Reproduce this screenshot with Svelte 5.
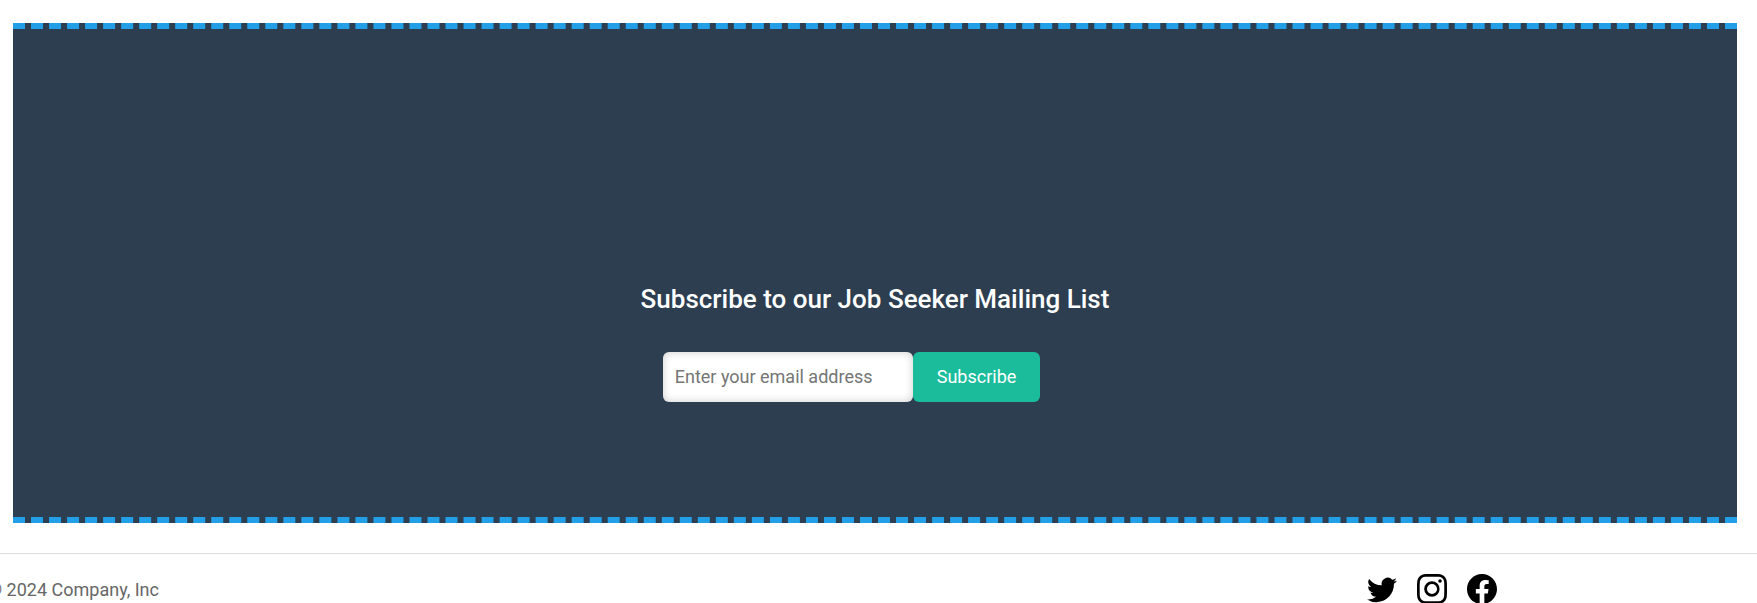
<script>
  let email = $state('');
</script>

<div class="page">
  <section class="subscribe">
    <h2>Subscribe to our Job Seeker Mailing List</h2>
    <form onsubmit={(e) => e.preventDefault()}>
      <input type="email" aria-label="Email address" placeholder="Enter your email address" bind:value={email} />
      <button type="submit">Subscribe</button>
    </form>
  </section>

  <footer>
    <p>© 2024 Company, Inc</p>
    <ul>
      <li>
        <a href="#twitter" aria-label="Twitter">
          <svg viewBox="0 0 16 16"><path d="M5.026 15c6.038 0 9.341-5.003 9.341-9.334 0-.14 0-.282-.006-.422A6.685 6.685 0 0 0 16 3.542a6.658 6.658 0 0 1-1.889.518 3.301 3.301 0 0 0 1.447-1.817 6.533 6.533 0 0 1-2.087.793A3.286 3.286 0 0 0 7.875 6.03a9.325 9.325 0 0 1-6.767-3.429 3.289 3.289 0 0 0 1.018 4.382A3.323 3.323 0 0 1 .64 6.575v.045a3.288 3.288 0 0 0 2.632 3.218 3.203 3.203 0 0 1-.865.115 3.23 3.23 0 0 1-.614-.057 3.283 3.283 0 0 0 3.067 2.277A6.588 6.588 0 0 1 .78 13.58a6.32 6.32 0 0 1-.78-.045A9.344 9.344 0 0 0 5.026 15z" /></svg>
        </a>
      </li>
      <li>
        <a href="#instagram" aria-label="Instagram">
          <svg viewBox="0 0 16 16"><path d="M8 0C5.829 0 5.556.01 4.703.048 3.85.088 3.269.222 2.76.42a3.917 3.917 0 0 0-1.417.923A3.927 3.927 0 0 0 .42 2.76C.222 3.268.087 3.85.048 4.7.01 5.555 0 5.827 0 8.001c0 2.172.01 2.444.048 3.297.04.852.174 1.433.372 1.942.205.526.478.972.923 1.417.444.445.89.719 1.416.923.51.198 1.09.333 1.942.372C5.555 15.99 5.827 16 8 16s2.444-.01 3.298-.048c.851-.04 1.434-.174 1.943-.372a3.916 3.916 0 0 0 1.416-.923c.445-.445.718-.891.923-1.417.197-.509.332-1.09.372-1.942C15.99 10.445 16 10.173 16 8s-.01-2.445-.048-3.299c-.04-.851-.175-1.433-.372-1.941a3.926 3.926 0 0 0-.923-1.417A3.911 3.911 0 0 0 13.24.42c-.51-.198-1.092-.333-1.943-.372C10.443.01 10.172 0 7.998 0h.003zm-.717 1.442h.718c2.136 0 2.389.007 3.232.046.78.035 1.204.166 1.486.275.373.145.64.319.92.599.28.28.453.546.598.92.11.281.24.705.275 1.485.039.843.047 1.096.047 3.231s-.008 2.389-.047 3.232c-.035.78-.166 1.203-.275 1.485a2.47 2.47 0 0 1-.599.919c-.28.28-.546.453-.92.598-.28.11-.704.24-1.485.276-.843.038-1.096.047-3.232.047s-2.39-.009-3.233-.047c-.78-.036-1.203-.166-1.485-.276a2.478 2.478 0 0 1-.92-.598 2.48 2.48 0 0 1-.6-.92c-.109-.281-.24-.705-.275-1.485-.038-.843-.046-1.096-.046-3.233 0-2.136.008-2.388.046-3.231.036-.78.166-1.204.276-1.486.145-.373.319-.64.599-.92.28-.28.546-.453.92-.598.282-.11.705-.24 1.485-.276.738-.034 1.024-.044 2.515-.045v.002zm4.988 1.328a.96.96 0 1 0 0 1.92.96.96 0 0 0 0-1.92zm-4.27 1.122a4.109 4.109 0 1 0 0 8.217 4.109 4.109 0 0 0 0-8.217zm0 1.441a2.667 2.667 0 1 1 0 5.334 2.667 2.667 0 0 1 0-5.334z" /></svg>
        </a>
      </li>
      <li>
        <a href="#facebook" aria-label="Facebook">
          <svg viewBox="0 0 16 16"><path d="M16 8.049c0-4.446-3.582-8.05-8-8.05C3.58 0-.002 3.603-.002 8.05c0 4.017 2.926 7.347 6.75 7.951v-5.625h-2.03V8.05H6.75V6.275c0-2.017 1.195-3.131 3.022-3.131.876 0 1.791.157 1.791.157v1.98h-1.009c-.993 0-1.303.621-1.303 1.258v1.51h2.218l-.354 2.326H9.25V16c3.824-.604 6.75-3.934 6.75-7.951z" /></svg>
        </a>
      </li>
    </ul>
  </footer>
</div>

<style>
  :global(body) {
    margin: 0;
    overflow: hidden;
    background: #fff;
  }
  .page {
    font-family: Roboto, 'Liberation Sans', sans-serif;
    font-size: 18px;
    line-height: 28px;
  }
  .subscribe {
    box-sizing: border-box;
    min-height: 500px;
    margin: 23px 20px 30px 13px;
    padding: 254px 0 115px;
    border-top: 6px dashed #229fe6;
    border-bottom: 6px dashed #229fe6;
    background: #2c3e50;
    color: #fff;
    text-align: center;
  }
  h2 {
    margin: 0 0 37px;
    font-size: 26px;
    font-weight: 500;
    line-height: 32px;
  }
  form {
    display: flex;
    justify-content: center;
    padding-right: 47px;
  }
  input,
  button {
    box-sizing: border-box;
    height: 50px;
    margin: 0;
    border: 0;
    border-radius: 6px;
    font: inherit;
  }
  input {
    width: 250px;
    padding: 0 12px 2px;
    background: #fff;
    box-shadow: inset 0 0 8px rgba(0, 0, 0, 0.2);
    color: #222;
  }
  input::placeholder {
    color: #757575;
  }
  button {
    padding: 0 24px;
    background: #1abc9c;
    color: #fff;
    cursor: pointer;
  }
  footer {
    display: flex;
    align-items: center;
    padding: 19px 260px 19px 0;
    border-top: 1px solid #dcdfe1;
  }
  p {
    margin: 0 0 0 -12px;
    padding-top: 2px;
    color: #666;
    line-height: 30px;
  }
  ul {
    display: flex;
    gap: 20px;
    margin: 0 0 0 auto;
    padding: 0;
    list-style: none;
  }
  a {
    display: block;
    color: #000;
  }
  svg {
    display: block;
    width: 30px;
    height: 30px;
    fill: currentColor;
  }
</style>
